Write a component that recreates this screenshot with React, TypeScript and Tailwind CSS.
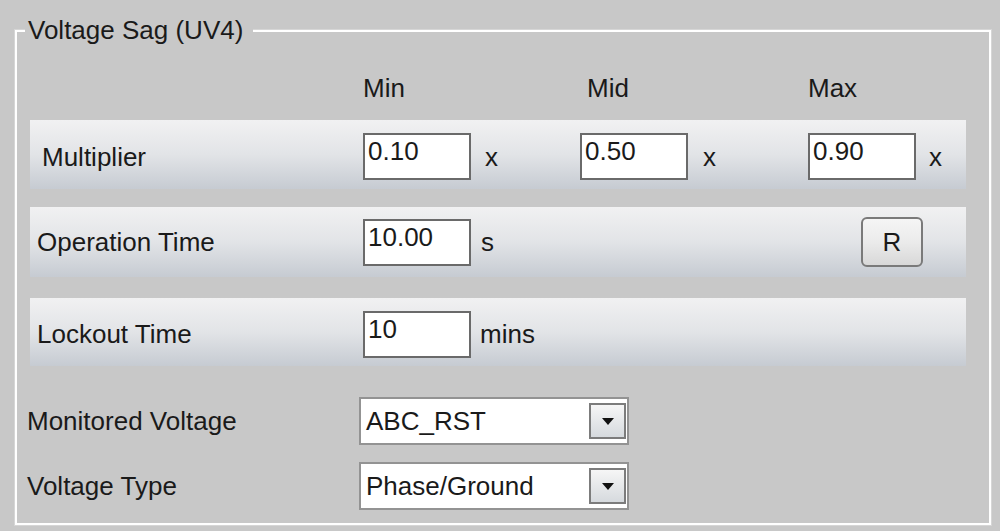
import React from 'react';

const font = { fontFamily: '"Liberation Sans", Arial, sans-serif' };

function TextBox({ value }: { value: string }) {
  return (
    <div className="w-[108px] h-[47px] shrink-0 bg-white border-2 border-[#6a6a6a] pl-[3px] pt-[1px] leading-[30px]">
      {value}
    </div>
  );
}

function Band({ children, className }: { children: React.ReactNode; className: string }) {
  return (
    <div
      className={
        'ml-[13px] w-[936px] flex items-center bg-gradient-to-b from-[#f1f1f2] via-[#e2e4e7] to-[#c6cbd2] ' +
        className
      }
    >
      {children}
    </div>
  );
}

function Combo({ value }: { value: string }) {
  return (
    <div className="w-[270px] h-[48px] shrink-0 bg-white border-2 border-[#939393] flex items-center pl-[5px] pr-[1px]">
      <span className="flex-1">{value}</span>
      <div className="w-[37px] h-[36px] border-2 border-[#7c7c7c] bg-gradient-to-b from-[#f6f6f6] to-[#d6dade] flex items-center justify-center">
        <svg width="12" height="7" viewBox="0 0 12 7">
          <path d="M0 0 H12 L6 7 Z" fill="#111" />
        </svg>
      </div>
    </div>
  );
}

export default function App() {
  return (
    <div
      className="w-[1000px] h-[531px] bg-[#c8c8c8] pt-[30px] pl-[15px] text-[26px] leading-[30px] text-[#1a1a1a] overflow-hidden"
      style={font}
    >
      <div className="relative w-[976px] h-[495px] border-2 border-white shadow-[0_0_0_1px_#d6d6d6]">
        {/* Legend */}
        <div className="absolute left-[8px] top-[-17px] h-[30px] bg-[#c8c8c8] pl-[3px] pr-[10px]">
          Voltage Sag (UV4)
        </div>

        {/* Column headers */}
        <div className="flex pl-[346px] pt-[41px]">
          <div className="w-[224px]">Min</div>
          <div className="w-[221px]">Mid</div>
          <div>Max</div>
        </div>

        {/* Multiplier */}
        <Band className="mt-[17px] h-[69px] pt-[4px] pl-[12px]">
          <div className="w-[321px]">Multiplier</div>
          <TextBox value="0.10" />
          <div className="ml-[14px] w-[95px]">x</div>
          <TextBox value="0.50" />
          <div className="ml-[15px] w-[105px]">x</div>
          <TextBox value="0.90" />
          <div className="ml-[13px]">x</div>
        </Band>

        {/* Operation Time */}
        <Band className="mt-[18px] h-[70px] pl-[7px]">
          <div className="w-[326px]">Operation Time</div>
          <TextBox value="10.00" />
          <div className="ml-[10px]">s</div>
          <button className="ml-auto mr-[43px] w-[62px] h-[50px] rounded-[6px] border-2 border-[#7a7a7a] bg-gradient-to-b from-[#f5f5f5] via-[#ebebeb] to-[#d8d8d8] flex items-center justify-center">
            R
          </button>
        </Band>

        {/* Lockout Time */}
        <Band className="mt-[21px] h-[68px] pt-[4px] pl-[7px]">
          <div className="w-[326px]">Lockout Time</div>
          <TextBox value="10" />
          <div className="ml-[9px]">mins</div>
        </Band>

        {/* Monitored Voltage */}
        <div className="mt-[31px] h-[48px] flex items-center pl-[10px]">
          <div className="w-[332px]">Monitored Voltage</div>
          <Combo value="ABC_RST" />
        </div>

        {/* Voltage Type */}
        <div className="mt-[17px] h-[48px] flex items-center pl-[10px]">
          <div className="w-[332px]">Voltage Type</div>
          <Combo value="Phase/Ground" />
        </div>
      </div>
    </div>
  );
}
